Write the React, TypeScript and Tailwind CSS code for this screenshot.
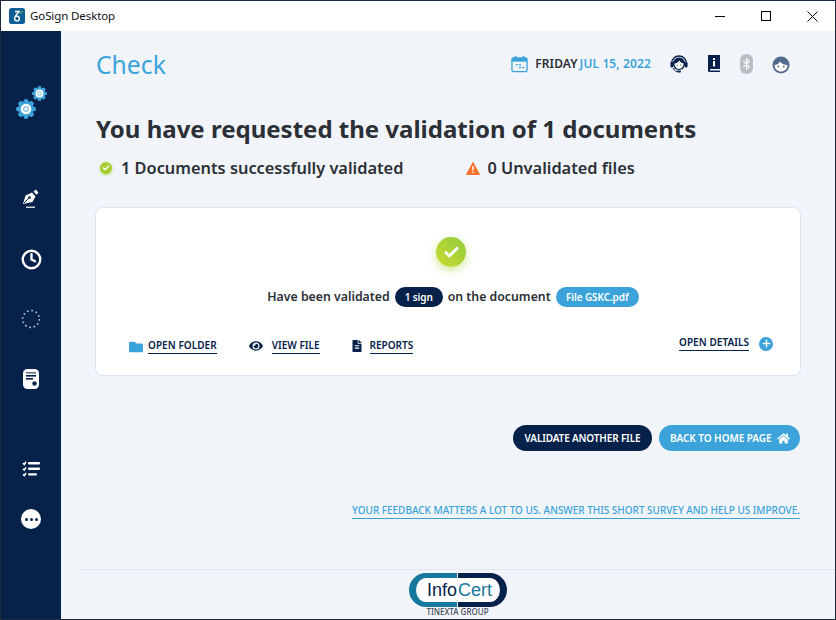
import { Bluetooth, Check, Clock, Plus } from "lucide-react";
import { FaEye, FaFileAlt, FaFolder, FaHome } from "react-icons/fa";

const Gear = ({ size }: { size: number }) => {
  const teeth = [0, 45, 90, 135, 180, 225, 270, 315];
  return (
    <svg width={size} height={size} viewBox="0 0 24 24">
      {teeth.map((a) => (
        <rect key={a} x="9.5" y="0.5" width="5" height="23" rx="1" fill="#3ba3d9" transform={`rotate(${a} 12 12)`} />
      ))}
      <circle cx="12" cy="12" r="9.5" fill="#3ba3d9" />
      <circle cx="12" cy="12" r="6.4" fill="#fff" />
      <circle cx="12" cy="12" r="3.6" fill="#8cc6e8" />
      <circle cx="12" cy="12" r="2" fill="#fff" />
    </svg>
  );
};

const Sidebar = () => (
  <aside className="w-[60px] shrink-0 bg-[#06214a] flex flex-col items-center">
    <div className="relative h-[50px] w-[40px] mt-[55px]">
      <span className="absolute left-[21px] top-0">
        <Gear size={15} />
      </span>
      <span className="absolute left-[5px] top-[13px]">
        <Gear size={20} />
      </span>
    </div>
    {/* pen */}
    <div className="mt-[33px] h-[60px] flex items-center justify-center">
      <svg width="18" height="20" viewBox="0 0 18 20">
        <path d="M1 15 L3.5 6.5 L10 3.5 L13.5 7.5 L10.5 13 Z" fill="#fff" />
        <path d="M2 14 L7 9" stroke="#06214a" strokeWidth="1" />
        <circle cx="7.5" cy="8.5" r="1.3" fill="#06214a" />
        <path d="M11.5 2.6 L13.8 0.6 L16.6 3.8 L14.4 5.8 Z" fill="#fff" />
        <rect x="4" y="17.6" width="9" height="1.2" fill="#fff" />
      </svg>
    </div>
    <div className="h-[60px] flex items-center justify-center">
      <Clock size={21} strokeWidth={2.7} className="text-white" />
    </div>
    <div className="h-[60px] flex items-center justify-center">
      <svg width="20" height="20" viewBox="0 0 20 20">
        <circle cx="10" cy="10" r="8.4" fill="none" stroke="#a9b6c9" strokeWidth="1.6" strokeDasharray="1.8 2.6" />
      </svg>
    </div>
    <div className="h-[60px] flex items-center justify-center">
      <svg width="16" height="20" viewBox="0 0 16 20">
        <rect x="0" y="0" width="16" height="20" rx="4.5" fill="#fff" />
        <rect x="3" y="3" width="10" height="1.6" fill="#5d7290" />
        <rect x="3" y="6" width="10" height="1.6" fill="#06214a" />
        <rect x="3" y="9" width="7" height="1.6" fill="#06214a" />
        <circle cx="11.5" cy="14.5" r="2.2" fill="#06214a" />
      </svg>
    </div>
    <div className="mt-[35px] h-[50px] flex items-center justify-center">
      <svg width="18" height="16" viewBox="0 0 18 16">
        <rect x="6" y="1" width="12" height="2.4" rx="1" fill="#fff" />
        <rect x="6" y="6.6" width="12" height="2.4" rx="1" fill="#fff" />
        <rect x="6" y="12.2" width="9" height="2.4" rx="1" fill="#fff" />
        <path d="M1 2.2 L2.3 3.4 L4 0.8" stroke="#fff" strokeWidth="1.6" fill="none" />
        <path d="M1 7.8 L2.3 9 L4 6.4" stroke="#fff" strokeWidth="1.6" fill="none" />
        <path d="M1 13.4 L2.3 14.6 L4 12" stroke="#fff" strokeWidth="1.6" fill="none" />
      </svg>
    </div>
    <div className="h-[50px] flex items-center justify-center">
      <div className="w-[20px] h-[20px] rounded-full bg-white flex items-center justify-center gap-[2px]">
        <span className="w-[3px] h-[3px] rounded-full bg-[#06214a]" />
        <span className="w-[3px] h-[3px] rounded-full bg-[#06214a]" />
        <span className="w-[3px] h-[3px] rounded-full bg-[#06214a]" />
      </div>
    </div>
  </aside>
);

const TopIcons = () => (
  <div className="flex items-center">
    <svg width="18" height="18" viewBox="0 0 18 18" className="ml-[19px]">
      <path d="M1.5 10 V8.5 A7.5 7.5 0 0 1 16.5 8.5 V10" fill="none" stroke="#06214a" strokeWidth="1.4" />
      <rect x="0.5" y="7" width="2.6" height="5.5" rx="1.2" fill="#06214a" />
      <rect x="14.9" y="7" width="2.6" height="5.5" rx="1.2" fill="#06214a" />
      <circle cx="9" cy="8.8" r="6.2" fill="#06214a" />
      <path d="M4.4 8.6 C6.5 8.4 8.5 7.2 9.5 5.6 C10.3 7.2 12 8.2 13.6 8.6 C13.6 11.6 11.6 14 9 14 C6.4 14 4.4 11.6 4.4 8.6Z" fill="#fff" />
      <circle cx="7.2" cy="10" r="0.6" fill="#06214a" />
      <circle cx="10.8" cy="10" r="0.6" fill="#06214a" />
      <path d="M3 13 C4.5 16 6.5 16.5 8 16.5" fill="none" stroke="#06214a" strokeWidth="1" />
      <rect x="7" y="15.6" width="4" height="2" rx="1" fill="#06214a" />
    </svg>
    <svg width="12" height="18" viewBox="0 0 12 18" className="ml-[20px]">
      <path d="M0 0 H12 V14 H2 V15.5 H12 V17 H1.5 A1.5 1.5 0 0 1 0 15.5 Z" fill="#06214a" />
      <rect x="5" y="3" width="2" height="2" fill="#fff" />
      <rect x="5" y="6" width="2" height="5.5" fill="#fff" />
    </svg>
    <div className="ml-[20px] w-[13px] h-[20px] rounded-[6px] bg-[#b9bfc6] flex items-center justify-center">
      <Bluetooth size={16} strokeWidth={2} className="text-white" />
    </div>
    <svg width="18" height="18" viewBox="0 0 18 18" className="ml-[19px] mt-[1px]">
      <circle cx="9" cy="9" r="8.5" fill="#53698a" />
      <path d="M2.5 9 C4 9 7 8 8 5.5 C9.5 8 13 9 15.5 9 C15.5 13 12.5 15.5 9 15.5 C5.5 15.5 2.5 13 2.5 9Z" fill="#fff" />
      <circle cx="6.3" cy="10.5" r="0.9" fill="#53698a" />
      <circle cx="11.7" cy="10.5" r="0.9" fill="#53698a" />
    </svg>
  </div>
);

const LinkText = ({ children, className }: { children: string; className: string }) => (
  <span className={`block text-[10px] leading-[13px] font-semibold text-[#06214a] border-b border-[#06214a] pb-[1px] ${className}`}>
    {children}
  </span>
);

export default function App() {
  return (
    <div className="w-[836px] h-[620px] flex flex-col border border-[#1b2a3f] bg-white overflow-hidden font-['Noto_Sans',sans-serif]">
      {/* TITLE BAR */}
      <div className="h-[30px] shrink-0 flex items-center bg-white">
        <svg width="16" height="16" viewBox="0 0 16 16" className="ml-[8px]">
          <rect width="16" height="16" rx="2.5" fill="#0f5f95" />
          <circle cx="8" cy="10.5" r="2.4" fill="none" stroke="#fff" strokeWidth="1.4" />
          <path d="M6 3.5 H10 L6.5 8" fill="none" stroke="#fff" strokeWidth="1.4" />
          <path d="M10.5 4.5 L11.5 5.5 L13.5 3" fill="none" stroke="#7ed04a" strokeWidth="1" />
        </svg>
        <span className="ml-[5px] text-[11.5px] text-[#111] tracking-[-0.1px]">GoSign Desktop</span>
        <div className="ml-auto flex items-center">
          <div className="w-[46px] h-[30px] flex items-center justify-center">
            <div className="w-[10px] h-px bg-black" />
          </div>
          <div className="w-[46px] h-[30px] flex items-center justify-center">
            <div className="w-[10px] h-[10px] border border-black" />
          </div>
          <div className="w-[46px] h-[30px] flex items-center justify-center">
            <svg width="11" height="11" viewBox="0 0 11 11">
              <path d="M0.5 0.5 L10.5 10.5 M10.5 0.5 L0.5 10.5" stroke="#000" strokeWidth="1" />
            </svg>
          </div>
        </div>
      </div>

      <div className="flex-1 flex min-h-0">
        <Sidebar />
        <main className="flex-1 bg-[#f1f5f9] flex flex-col min-w-0">
          <div className="pl-[35px] pr-[35px] flex-1">
            {/* TOP */}
            <div className="flex items-center justify-between mt-[14px] h-[38px] pr-[10px]">
              <h1 className="pt-[2px] text-[24.7px] font-normal text-[#3ba3d9]">Check</h1>
              <div className="flex items-center">
                <svg width="17" height="18" viewBox="0 0 18 18">
                  <rect x="1" y="2.5" width="16" height="14.5" rx="2" fill="none" stroke="#3ba3d9" strokeWidth="1.4" />
                  <rect x="1" y="2.5" width="16" height="4" fill="#3ba3d9" />
                  <rect x="4" y="0.5" width="1.6" height="3.5" fill="#3ba3d9" />
                  <rect x="12.4" y="0.5" width="1.6" height="3.5" fill="#3ba3d9" />
                  <rect x="5" y="9" width="2" height="1.5" fill="#3ba3d9" />
                  <rect x="8.5" y="9" width="2" height="1.5" fill="#3ba3d9" />
                  <rect x="8.5" y="12" width="2" height="1.5" fill="#3ba3d9" />
                  <rect x="12" y="12" width="2" height="1.5" fill="#3ba3d9" />
                </svg>
                <span className="ml-[7px] text-[12px] font-semibold text-[#2b2f36] tracking-[0.1px]">FRIDAY</span>
                <span className="ml-[2px] text-[12px] font-semibold text-[#3ba3d9] tracking-[0.12px]">JUL 15, 2022</span>
                <TopIcons />
              </div>
            </div>

            <h2 className="mt-[29px] text-[24px] leading-[33px] font-bold text-[#2b2f36]">
              You have requested the validation of 1 documents
            </h2>

            <div className="mt-[12px] flex items-center h-[22px]">
              <div className="w-[12px] h-[12px] rounded-full bg-[#a5cf35] shadow-[0_1px_3px_rgba(165,207,53,0.7)] flex items-center justify-center ml-[4px]">
                <Check size={8} strokeWidth={4} className="text-white" />
              </div>
              <span className="ml-[9px] text-[16.35px] font-semibold text-[#2b2f36]">1 Documents successfully validated</span>
              <svg width="14" height="13" viewBox="0 0 14 13" className="ml-[63px]">
                <path d="M7 0.5 L13.5 12.5 H0.5 Z" fill="#f4722b" stroke="#f4722b" strokeLinejoin="round" />
                <rect x="6.3" y="4" width="1.4" height="4.5" fill="#fff" />
                <rect x="6.3" y="9.5" width="1.4" height="1.4" fill="#fff" />
              </svg>
              <span className="ml-[7px] text-[16.35px] font-semibold text-[#2b2f36]">0 Unvalidated files</span>
            </div>

            {/* CARD */}
            <div className="mt-[28px] -mx-px h-[169px] bg-white rounded-[8px] border border-[#d8e6f3] flex flex-col">
              <div className="mt-[29px] ml-[6px] self-center w-[30px] h-[30px] rounded-full bg-gradient-to-tr from-[#c9dc2e] to-[#8fcb3c] shadow-[0_3px_8px_rgba(165,207,53,0.55)] flex items-center justify-center">
                <Check size={17} strokeWidth={4} className="text-white" />
              </div>
              <div className="mt-[20px] pl-[10px] flex items-center justify-center text-[12.3px] font-semibold text-[#2b2f36]">
                <span>Have been validated</span>
                <span className="ml-[5px] h-[20px] w-[48px] justify-center rounded-full bg-[#06214a] text-white text-[10px] tracking-[-0.1px] font-semibold flex items-center">1 sign</span>
                <span className="ml-[5px]">on the document</span>
                <span className="ml-[5px] h-[20px] w-[83px] justify-center rounded-full bg-[#3ba3d9] text-white text-[10px] tracking-[-0.1px] font-semibold flex items-center">File GSKC.pdf</span>
              </div>
              <div className="mt-[32px] flex items-center pl-[33px] pr-[27px]">
                <FaFolder size={14} className="text-[#3ba3d9]" />
                <LinkText className="ml-[5px] tracking-[0.05px]">OPEN FOLDER</LinkText>
                <FaEye size={14} className="ml-[32px] -translate-y-px text-[#06214a]" />
                <LinkText className="ml-[9px]">VIEW FILE</LinkText>
                <FaFileAlt size={12} className="ml-[31px] -translate-y-px text-[#06214a]" />
                <LinkText className="ml-[7px]">REPORTS</LinkText>
                <LinkText className="ml-auto -translate-y-[3px] tracking-[0.05px]">OPEN DETAILS</LinkText>
                <div className="ml-[10px] -translate-y-[3px] w-[14px] h-[14px] rounded-full bg-[#3ba3d9] flex items-center justify-center">
                  <Plus size={11} strokeWidth={3} className="text-white" />
                </div>
              </div>
            </div>

            {/* ACTIONS */}
            <div className="mt-[49px] flex justify-end gap-[7px]">
              <button className="h-[26px] w-[139px] rounded-full bg-[#06214a] text-white text-[10px] tracking-[-0.15px] font-semibold">VALIDATE ANOTHER FILE</button>
              <button className="h-[26px] w-[141px] pl-[11px] rounded-full bg-[#3ba3d9] text-white text-[10px] tracking-[-0.05px] font-semibold flex items-center gap-[5px]">
                BACK TO HOME PAGE
                <FaHome size={13} />
              </button>
            </div>

            <div className="mt-[51px] flex justify-end">
              <a className="text-[10px] leading-[16px] font-medium tracking-[-0.02px] text-[#3ba3d9] border-b border-[#3ba3d9]">
                YOUR FEEDBACK MATTERS A LOT TO US. ANSWER THIS SHORT SURVEY AND HELP US IMPROVE.
              </a>
            </div>
          </div>

          {/* FOOTER */}
          <div className="ml-[19px] h-[50px] border-t border-[#e3e8ee] flex flex-col items-center">
            <div className="mt-[3px] w-[98px] h-[34px] flex gap-[1px] text-[18px] leading-none font-['Liberation_Sans',sans-serif]">
              <div className="flex-1 rounded-l-full border-y-[5px] border-l-[7px] border-[#16779f] bg-white flex items-center justify-end">
                <span className="text-[#06214a]">Info</span>
              </div>
              <div className="flex-1 rounded-r-full border-y-[5px] border-r-[7px] border-[#06214a] bg-white flex items-center justify-start">
                <span className="text-[#16779f]">Cert</span>
              </div>
            </div>
            <span className="text-[8px] leading-[10px] text-[#3f4a58] font-medium">TINEXTA GROUP</span>
          </div>
        </main>
      </div>
    </div>
  );
}
